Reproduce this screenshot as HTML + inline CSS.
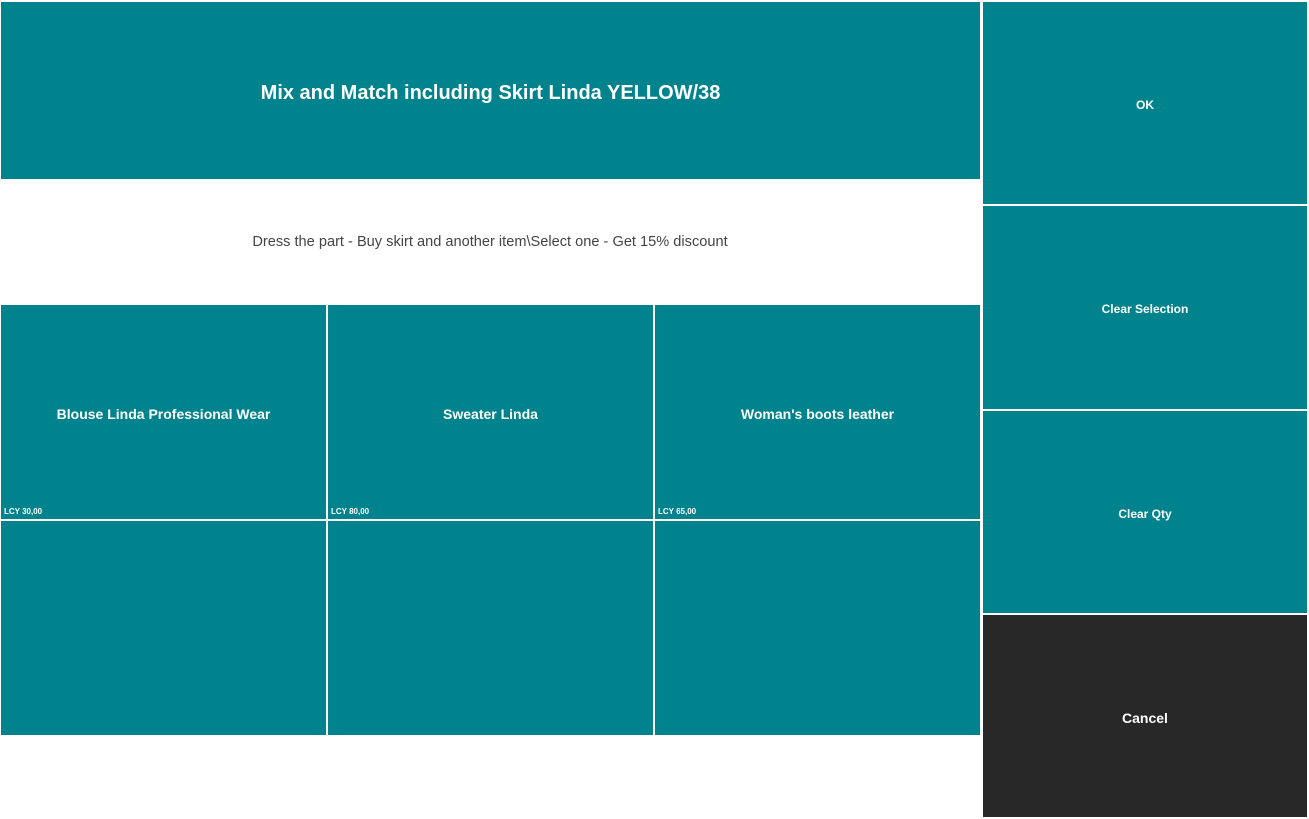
<!DOCTYPE html>
<html><head><style>
body{margin:0;width:1309px;height:819px;background:#fff;position:relative;overflow:hidden;font-family:"Liberation Sans","DejaVu Sans",sans-serif}
.b{position:absolute;background:#00838d;color:#fff;display:flex;align-items:center;justify-content:center;font-weight:bold;padding-top:3px;box-sizing:border-box}
.p{position:absolute;left:3px;bottom:3px;font-size:8px;font-weight:bold}
</style></head><body>
<div class="b" style="left:1px;top:2px;width:979px;height:177px;font-size:20px;padding-top:6px">Mix and Match including Skirt Linda YELLOW/38</div>
<div style="position:absolute;left:0;top:234px;width:980px;text-align:center;font-size:14.6px;color:#444">Dress the part - Buy skirt and another item\Select one - Get 15% discount</div>
<div class="b" style="left:1px;top:305px;width:325px;height:214px;font-size:14px">Blouse Linda Professional Wear<span class="p">LCY 30,00</span></div>
<div class="b" style="left:328px;top:305px;width:325px;height:214px;font-size:14px">Sweater Linda<span class="p">LCY 80,00</span></div>
<div class="b" style="left:655px;top:305px;width:325px;height:214px;font-size:14px">Woman's boots leather<span class="p">LCY 65,00</span></div>
<div class="b" style="left:1px;top:521px;width:325px;height:214px"></div>
<div class="b" style="left:328px;top:521px;width:325px;height:214px"></div>
<div class="b" style="left:655px;top:521px;width:325px;height:214px"></div>
<div class="b" style="left:983px;top:2px;width:324px;height:202px;font-size:12px">OK</div>
<div class="b" style="left:983px;top:206px;width:324px;height:203px;font-size:12px">Clear Selection</div>
<div class="b" style="left:983px;top:411px;width:324px;height:202px;font-size:12px">Clear Qty</div>
<div class="b" style="left:983px;top:615px;width:324px;height:202px;font-size:14px;background:#282828">Cancel</div>
</body></html>
